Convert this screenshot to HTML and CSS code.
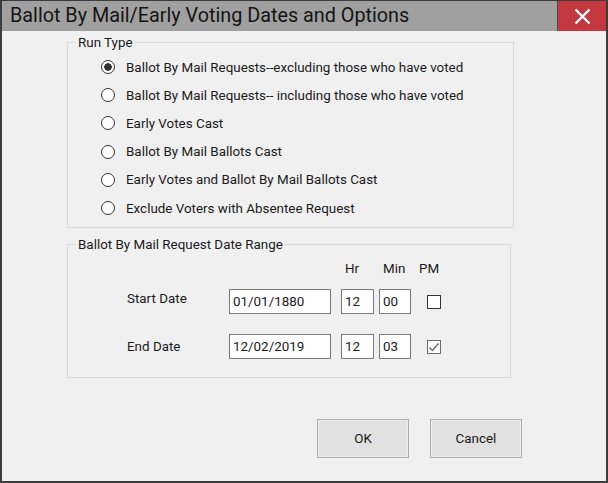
FILE: index.html
```html
<!DOCTYPE html>
<html lang="en">
<head>
  <meta charset="UTF-8" />
  <title>Ballot By Mail/Early Voting Dates and Options</title>
  <link rel="stylesheet" href="styles.css">
</head>
<body>

<div class="window">
  <div class="titlebar">
    <div class="title">Ballot By Mail/Early Voting Dates and Options</div>
    <button class="close" aria-label="Close">
      <svg width="17" height="17" viewBox="0 0 17 17"><path d="M1.5 1.5 L15.5 15.5 M15.5 1.5 L1.5 15.5" stroke="#fff" stroke-width="2.4" fill="none"/></svg>
    </button>
  </div>

  <div class="client">
    <fieldset class="group run-type">
      <legend>Run Type</legend>
      <div class="options">
        <label class="radio"><input type="radio" name="run" checked><span>Ballot By Mail Requests--excluding those who have voted</span></label>
        <label class="radio"><input type="radio" name="run"><span>Ballot By Mail Requests-- including those who have voted</span></label>
        <label class="radio"><input type="radio" name="run"><span>Early Votes Cast</span></label>
        <label class="radio"><input type="radio" name="run"><span>Ballot By Mail Ballots Cast</span></label>
        <label class="radio"><input type="radio" name="run"><span>Early Votes and Ballot By Mail Ballots Cast</span></label>
        <label class="radio"><input type="radio" name="run"><span>Exclude Voters with Absentee Request</span></label>
      </div>
    </fieldset>

    <fieldset class="group date-range">
      <legend>Ballot By Mail Request Date Range</legend>
      <div class="date-rows">
        <div class="date-row head">
          <span class="cell label"></span>
          <span class="cell date"></span>
          <span class="cell hr">Hr</span>
          <span class="cell min">Min</span>
          <span class="cell pm">PM</span>
        </div>
        <div class="date-row first">
          <span class="cell label">Start Date</span>
          <input class="txt date" type="text" value="01/01/1880">
          <input class="txt hr" type="text" value="12">
          <input class="txt min" type="text" value="00">
          <span class="check"></span>
        </div>
        <div class="date-row">
          <span class="cell label">End Date</span>
          <input class="txt date" type="text" value="12/02/2019">
          <input class="txt hr" type="text" value="12">
          <input class="txt min" type="text" value="03">
          <span class="check checked">
            <svg width="12" height="12" viewBox="0 0 12 12"><path d="M1.5 6.5 L4.5 9.5 L10.5 2.5" stroke="#6a6a6a" stroke-width="1.3" fill="none"/></svg>
          </span>
        </div>
      </div>
    </fieldset>

    <div class="buttons">
      <button class="btn">OK</button>
      <button class="btn">Cancel</button>
    </div>
  </div>
</div>

</body>
</html>
```

FILE: styles.css
```css
:root {
  --frame: #3c3c3c;
  --title-bg: #a0a0a0;
  --close-bg: #c4383f;
  --face: #f0f0f0;
  --text: #1a1a1a;
  --group-line: #d9d9d9;
  --box-line: #7a7a7a;
}

body {
  margin: 0;
  font-family: Roboto, 'Liberation Sans', Arial, sans-serif;
  color: var(--text);
}

.window {
  width: 608px;
  height: 483px;
  box-sizing: border-box;
  border: 2px solid var(--frame);
  border-top-width: 1px;
  background: var(--face);
  display: flex;
  flex-direction: column;
}

.titlebar {
  height: 30px;
  display: flex;
  align-items: stretch;
  background: var(--title-bg);
}

.title {
  flex: 1;
  padding-left: 8px;
  font-size: 19.8px;
  line-height: 30px;
  color: #141414;
}

.close {
  width: 49px;
  border: none;
  border-left: 1px solid #4a4a4a;
  background: var(--close-bg);
  padding: 0;
  display: flex;
  align-items: center;
  justify-content: center;
}

.client {
  flex: 1;
  padding-top: 4px;
}

/* group boxes */
.group {
  margin: 0 0 0 65px;
  padding: 0;
  border: 1px solid var(--group-line);
  box-sizing: border-box;
  font-size: 13.4px;
}

.group legend {
  padding: 0 2px;
  margin-left: 8px;
  line-height: 15px;
}

.run-type {
  width: 447px;
}

.options {
  padding: 3px 0 5px 33px;
}

.radio {
  display: flex;
  align-items: center;
  height: 28.2px;
}

.radio input {
  appearance: none;
  -webkit-appearance: none;
  width: 14px;
  height: 14px;
  margin: 0 11px 0 0;
  border: 1px solid #333;
  border-radius: 50%;
  background: #fff;
}

.radio input:checked {
  background: radial-gradient(circle, #333 0 3.5px, #fff 4px);
}

.date-range {
  width: 444px;
  margin-top: 9px;
}

.date-rows {
  padding: 8px 0 18px 59px;
}

.date-row {
  display: flex;
  align-items: center;
  height: 25px;
}

.date-row.head {
  height: 16px;
  margin-bottom: 13px;
}

.date-row.first {
  margin-bottom: 20px;
}

.cell.label { width: 102px; }
.cell.date { width: 112px; }
.cell.hr { width: 34px; padding-left: 4px; }
.cell.min { width: 44px; padding-left: 4px; }
.cell.pm { margin-left: -8px; }

.date-row.first .label {
  margin-top: -6px;
}

.txt {
  box-sizing: border-box;
  height: 25px;
  border: 1px solid var(--box-line);
  background: #fff;
  font: 13.4px Roboto, 'Liberation Sans', Arial, sans-serif;
  color: var(--text);
  padding: 0 0 0 3px;
  margin: 0;
}

.txt.date { width: 102px; margin-right: 10px; }
.txt.hr { width: 33px; margin-right: 5px; }
.txt.min { width: 32px; margin-right: 16px; }

.check {
  box-sizing: border-box;
  width: 14px;
  height: 14px;
  border: 1px solid #333;
  background: #fff;
  display: flex;
  align-items: center;
  justify-content: center;
}

.check.checked {
  border-color: #6a6a6a;
}

/* dialog buttons */
.buttons {
  display: flex;
  justify-content: flex-end;
  gap: 21px;
  margin-top: 41px;
  padding-right: 84px;
}

.btn {
  width: 92px;
  height: 39px;
  border: 1px solid #adadad;
  box-shadow: inset 0 0 0 1px #ececec;
  background: #e1e1e1;
  font: 13.4px Roboto, 'Liberation Sans', Arial, sans-serif;
  color: var(--text);
}
```
